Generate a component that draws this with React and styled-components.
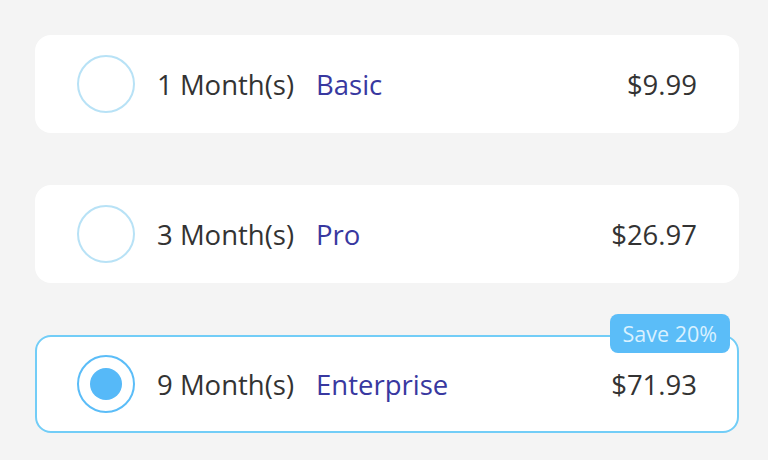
import React from "react";
import styled, { createGlobalStyle } from "styled-components";

const Global = createGlobalStyle`
  html, body { margin: 0; padding: 0; background: #f4f4f4; }
  body { font-family: "Open Sans", "Noto Sans", sans-serif; }
`;

const List = styled.div`
  display: flex;
  flex-direction: column;
  gap: 52px;
  padding: 35px 29px 0 35px;
  width: 768px;
  box-sizing: border-box;
`;

const Card = styled.div`
  position: relative;
  display: flex;
  align-items: center;
  height: 98px;
  box-sizing: border-box;
  padding: 0 ${(p) => (p.$selected ? 40 : 42)}px;
  background: #fff;
  border-radius: 16px;
  border: ${(p) => (p.$selected ? "2px solid #72cdf7" : "none")};
`;

const Radio = styled.div`
  width: 58px;
  height: 58px;
  box-sizing: border-box;
  border-radius: 50%;
  border: 2px solid ${(p) => (p.$selected ? "#5bbdf8" : "#b8e2f6")};
  display: flex;
  align-items: center;
  justify-content: center;
  flex-shrink: 0;
`;

const Dot = styled.div`
  width: 32px;
  height: 32px;
  border-radius: 50%;
  background: #56b9f8;
`;

const Text = styled.span`
  font-size: 27.5px;
  line-height: 1;
  padding-top: 2px;
`;

const Duration = styled(Text)`
  margin-left: 22px;
  color: #333;
`;

const Plan = styled(Text)`
  margin-left: 22px;
  color: #3838a0;
`;

const Price = styled(Text)`
  margin-left: auto;
  color: #333;
`;

const Badge = styled.div`
  position: absolute;
  top: -23px;
  right: 7px;
  height: 39px;
  padding: 0 13px;
  display: flex;
  align-items: center;
  background: #5bbdf8;
  color: #d9f1ff;
  font-size: 21.5px;
  border-radius: 8px;
`;

const plans = [
  { months: 1, name: "Basic", price: "$9.99" },
  { months: 3, name: "Pro", price: "$26.97" },
  { months: 9, name: "Enterprise", price: "$71.93", selected: true, badge: "Save 20%" },
];

export default function App() {
  return (
    <>
      <Global />
      <List>
        {plans.map((p) => (
          <Card key={p.months} $selected={p.selected}>
            <Radio $selected={p.selected}>{p.selected && <Dot />}</Radio>
            <Duration>{p.months} Month(s)</Duration>
            <Plan>{p.name}</Plan>
            <Price>{p.price}</Price>
            {p.badge && <Badge>{p.badge}</Badge>}
          </Card>
        ))}
      </List>
    </>
  );
}
